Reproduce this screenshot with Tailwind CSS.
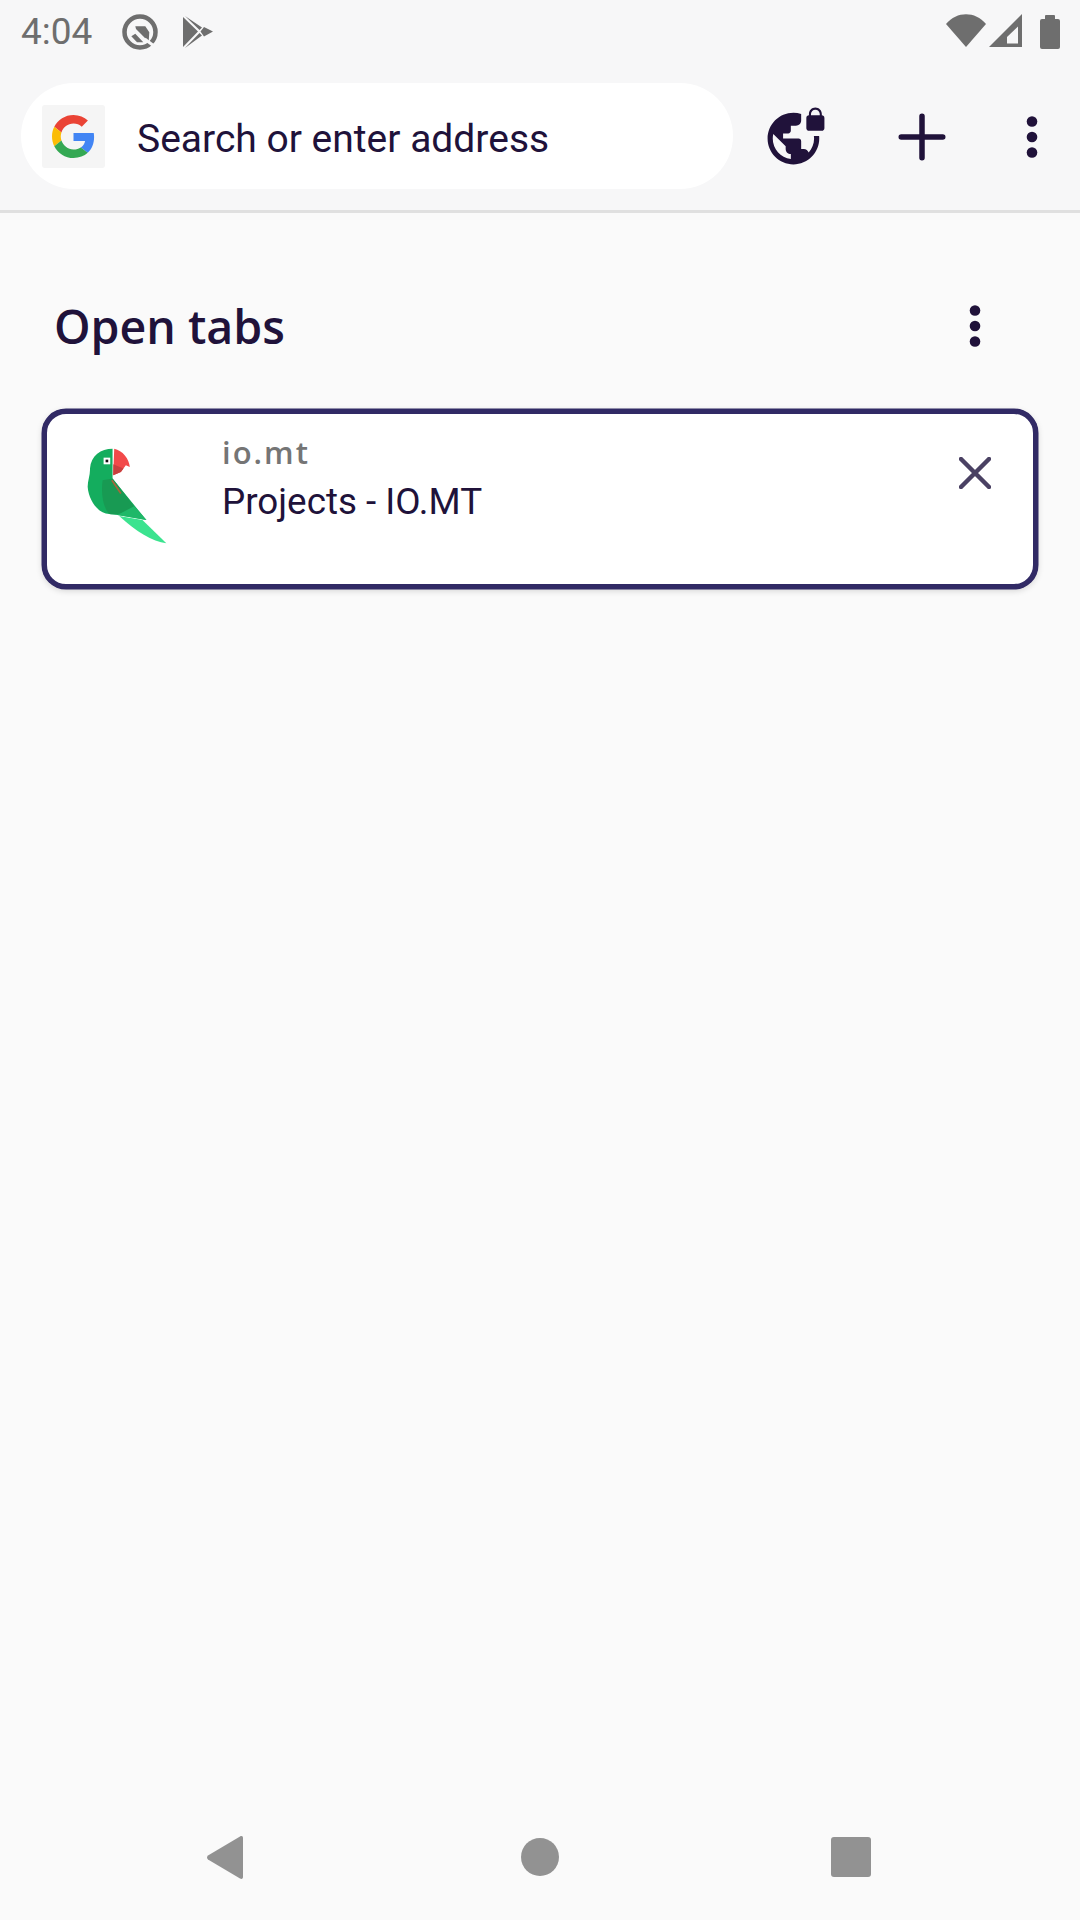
<!DOCTYPE html>
<html>
  <head>
    <title>Open tabs</title>
    <script src="https://cdn.jsdelivr.net/npm/@tailwindcss/browser@4"></script>
  </head>

  <body class="bg-[#fafafa]">
    <div class="h-[1920px] w-[1080px] flex flex-col overflow-hidden bg-[#fafafa] font-['Roboto',sans-serif]">
      <!-- status bar -->
      <div class="h-[63px] shrink-0 flex items-center pl-[21px] bg-[#f7f7f8] text-[#6e6e6e]">
        <span class="text-[37px] leading-none w-[101px]">4:04</span>
        <svg viewBox="0 0 36 36" class="w-[36px] h-[36px] shrink-0">
          <circle cx="18" cy="18" r="15.5" fill="none" stroke="#6e6e6e" stroke-width="4.5" />
          <path d="M13.300 12.300 L23.300 12.300 L27.300 18.300 L26.700 27.700 L14 15 Z M9.300 22.300 L13.300 19.700 L21.300 28.300 L15 28.300 Z" fill="#6e6e6e" />
          <path d="M22.700 25 L35 34.300" stroke="#f7f7f8" stroke-width="3" />
        </svg>
        <svg viewBox="0 0 30 32" class="w-[30px] h-[32px] ml-[25px] shrink-0">
          <path d="M0 1 L15 15.500 L0 31 Z M2 0 L19 11.500 L16.500 14 Z M2 32 L19 19.500 L16.500 17 Z M21 11 L30 15.500 L21 20.500 L17.500 15.500 Z" fill="#6e6e6e" />
        </svg>
        <div class="flex-1"></div>
        <svg viewBox="0 0 40 33" class="w-[40px] h-[33px] mb-[2px] shrink-0">
          <path d="M0 10 C11 -3 29 -3 40 10 L20 33 Z" fill="#6e6e6e" />
        </svg>
        <svg viewBox="0 0 33 33" class="w-[33px] h-[33px] ml-[3px] mb-[2px] shrink-0">
          <path d="M0 33 L33 0 L33 33 Z" fill="#6e6e6e" />
          <path d="M18 29.500 L18 23 L29 12.500 L29 29.500 Z" fill="#f7f7f8" />
        </svg>
        <div class="ml-[18px] mr-[20px] shrink-0 flex flex-col items-center">
          <div class="w-[10px] h-[4px] bg-[#6e6e6e] rounded-t-[1px]"></div>
          <div class="w-[20px] h-[30px] bg-[#6e6e6e] rounded-[2px]"></div>
        </div>
      </div>

      <!-- toolbar -->
      <div class="h-[150px] shrink-0 flex items-start pt-[20px] pl-[21px] bg-[#f7f7f8] border-b-[3px] border-[#e0e0e0]">
        <div class="w-[712px] h-[106px] shrink-0 flex items-center pl-[21px] bg-white rounded-[53px]">
          <div class="w-[63px] h-[63px] flex items-center justify-center bg-[#f5f5f5] rounded-[3px]">
            <svg viewBox="0 0 48 48" class="w-[43px] h-[43px]">
              <path fill="#ea4335" d="M24 9.500c3.540 0 6.710 1.220 9.210 3.600l6.850-6.850C35.900 2.380 30.470 0 24 0 14.620 0 6.510 5.380 2.560 13.220l7.980 6.190C12.430 13.720 17.740 9.500 24 9.500z" />
              <path fill="#4285f4" d="M46.980 24.550c0-1.570-.15-3.090-.38-4.550H24v9.020h12.940c-.58 2.960-2.260 5.480-4.780 7.180l7.730 6c4.510-4.180 7.090-10.360 7.090-17.650z" />
              <path fill="#fbbc05" d="M10.530 28.590c-.48-1.450-.76-2.990-.76-4.590s.27-3.140.76-4.590l-7.980-6.190C.92 16.460 0 20.120 0 24c0 3.880.92 7.540 2.560 10.780l7.970-6.190z" />
              <path fill="#34a853" d="M24 48c6.480 0 11.930-2.130 15.890-5.810l-7.730-6c-2.150 1.450-4.920 2.300-8.160 2.300-6.260 0-11.570-4.220-13.470-9.910l-7.980 6.190C6.510 42.620 14.620 48 24 48z" />
            </svg>
          </div>
          <span class="ml-[32px] mt-[6px] text-[39px] leading-none text-[#20123a]">Search or enter address</span>
        </div>
        <svg viewBox="0 0 24 24" class="w-[62px] h-[62px] ml-[32px] mt-[22px] shrink-0" fill="#20123a">
          <path d="M22 4v-.5C22 2.120 20.880 1 19.500 1S17 2.120 17 3.500V4c-.55 0-1 .45-1 1v4c0 .55.45 1 1 1h5c.55 0 1-.45 1-1V5c0-.55-.45-1-1-1zm-.8 0h-3.400v-.5c0-.94.76-1.700 1.700-1.700s1.700.76 1.700 1.700V4zm-2.280 8c.04.33.08.66.08 1 0 2.080-.8 3.970-2.100 5.390-.26-.81-1-1.390-1.900-1.390h-1v-3c0-.55-.45-1-1-1H7v-2h2c.55 0 1-.45 1-1V8h2c1.100 0 2-.9 2-2V3.460c-.95-.3-1.950-.46-3-.46C5.480 3 1 7.480 1 13s4.480 10 10 10 10-4.480 10-10c0-.34-.02-.67-.05-1h-2.030zM10 20.930c-3.950-.49-7-3.850-7-7.930 0-.62.08-1.210.21-1.790L8 16v1c0 1.100.9 2 2 2v1.930z" />
        </svg>
        <svg viewBox="0 0 60 60" class="w-[60px] h-[60px] ml-[65px] mt-[24px] shrink-0" stroke="#20123a" stroke-width="5.500" stroke-linecap="round">
          <path d="M30 9.250 V50.750 M9.250 30 H50.750" />
        </svg>
        <svg viewBox="0 0 12 42" class="w-[12px] h-[42px] ml-[74px] mt-[33px] shrink-0" fill="#20123a">
          <circle cx="6" cy="5.500" r="5.300" />
          <circle cx="6" cy="21" r="5.300" />
          <circle cx="6" cy="36.500" r="5.300" />
        </svg>
      </div>

      <!-- tabs tray -->
      <div class="flex-1 px-[42px]">
        <div class="h-[196px] flex items-center pt-[30px] pl-[12px] pr-[57px] justify-between">
          <h1 class="font-['Open_Sans',sans-serif] font-semibold text-[46.500px] leading-none text-[#20123a]">Open tabs</h1>
          <svg viewBox="0 0 12 42" class="w-[12px] h-[42px]" fill="#20123a">
            <circle cx="6" cy="5.500" r="5.300" />
            <circle cx="6" cy="21" r="5.300" />
            <circle cx="6" cy="36.500" r="5.300" />
          </svg>
        </div>

        <div class="h-[180px] flex bg-white border-[5px] border-[#312a65] rounded-[24px] shadow-[0_0_0_0.5px_#312a65,0_2px_6px_rgba(0,0,0,0.15)]">
          <svg viewBox="170 140 250 295" class="w-[83px] h-[98px] ml-[39px] mt-[33px] shrink-0">
            <path d="M250 145 C215 145 185 165 182 205 C183 225 175 240 175 260 C178 300 205 340 240 342 L265 345 L352 360 L250 235 Z" fill="#14ad5e" />
            <path d="M220 240 L250 235 L315 318 C300 335 270 345 240 342 C220 320 215 280 220 240 Z" fill="#189a53" />
            <path d="M315 318 L352 360 L265 345 Z" fill="#1fb868" />
            <path d="M270 348 L340 360 L412 430 C370 425 320 395 270 348 Z" fill="#3be38f" />
            <path d="M255 145 C280 150 300 175 302 200 L290 195 L275 215 L252 225 Z" fill="#f24a4a" />
            <path d="M252 192 L283 205 L275 215 L252 225 Z" fill="#c8403f" />
            <path d="M248 240 L275 280" stroke="#a8663c" stroke-width="5" />
            <rect x="223" y="172" width="20" height="20" fill="#fff" />
            <rect x="229" y="178" width="8" height="8" fill="#111" />
          </svg>
          <div class="ml-[53px] flex-1 flex flex-col pt-[21px]">
            <span class="font-['Open_Sans',sans-serif] font-semibold text-[31px] leading-[34px] tracking-[2px] text-[#757575]">io.mt</span>
            <span class="mt-[12px] text-[36.800px] leading-[42px] text-[#20123a]">Projects - IO.MT</span>
          </div>
          <svg viewBox="0 0 32 32" class="w-[32px] h-[32px] mt-[43px] mr-[42px] shrink-0" stroke="#4a4163" stroke-width="4.500" stroke-linecap="round">
            <path d="M2 2 L30 30 M30 2 L2 30" />
          </svg>
        </div>
      </div>

      <!-- navigation bar -->
      <div class="h-[126px] shrink-0 relative flex items-center">
        <svg viewBox="0 0 36 43" class="w-[36px] h-[43px] ml-[207px] shrink-0" fill="#929292">
          <path d="M33 0.500 C35 -0.500 36 0.500 36 2 V41 C36 42.500 35 43.500 33 42.500 L1 23.500 C-0.300 22.500 -0.300 20.500 1 19.500 Z" />
        </svg>
        <div class="w-[38px] h-[38px] ml-[278px] rounded-full bg-[#929292] shrink-0"></div>
        <div class="w-[40px] h-[40px] ml-[272px] rounded-[3px] bg-[#929292] shrink-0"></div>
      </div>
    </div>
  </body>
</html>
